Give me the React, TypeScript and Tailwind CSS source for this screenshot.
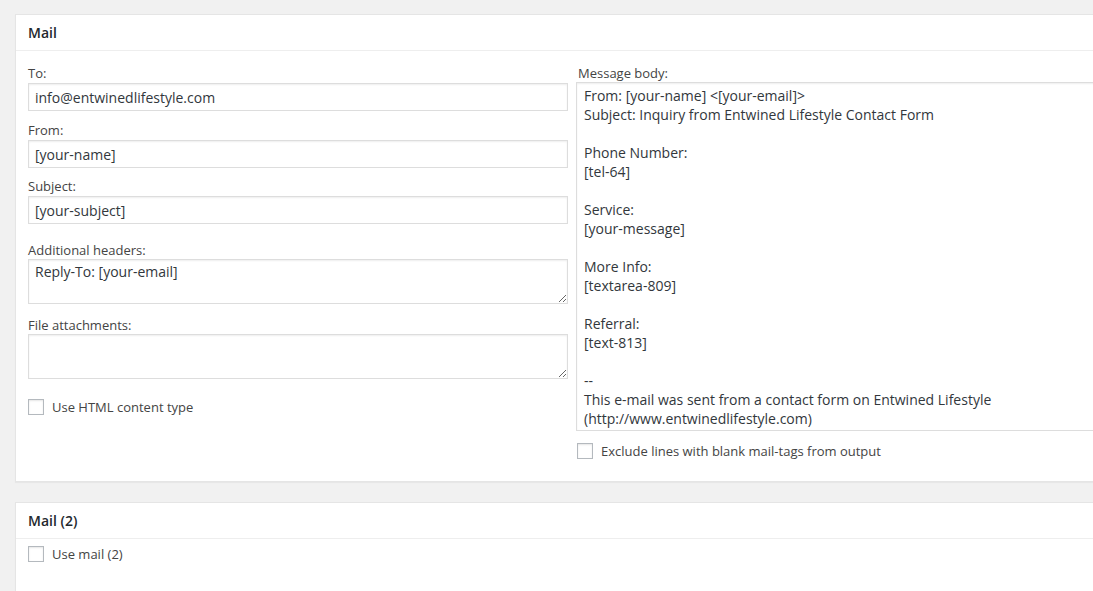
import React from "react";

const font = { fontFamily: '"Open Sans", "Liberation Sans", sans-serif' };

const body = `From: [your-name] <[your-email]>
Subject: Inquiry from Entwined Lifestyle Contact Form

Phone Number:
[tel-64]

Service:
[your-message]

More Info:
[textarea-809]

Referral:
[text-813]

--
This e-mail was sent from a contact form on Entwined Lifestyle
(http://www.entwinedlifestyle.com)`;

function Label({ children }: { children: React.ReactNode }) {
  return <div className="text-[13px] leading-[18px] text-[#444]">{children}</div>;
}

function TextInput({ value }: { value: string }) {
  return (
    <input
      readOnly
      value={value}
      className="mt-px block h-[28px] w-full border border-[#ddd] bg-white px-[6px] text-[14px] text-[#32373c] shadow-[inset_0_1px_2px_rgba(0,0,0,0.07)] outline-none"
      style={font}
    />
  );
}

function Checkbox({ label }: { label: string }) {
  return (
    <div className="flex items-center">
      <span className="block h-[16px] w-[16px] border border-[#b4b9be] bg-white shadow-[inset_0_1px_2px_rgba(0,0,0,0.1)]" />
      <span className="ml-[8px] text-[13px] leading-[18px] text-[#444]">{label}</span>
    </div>
  );
}

export default function App() {
  return (
    <div className="min-h-[591px] w-[1093px] overflow-hidden bg-[#f1f1f1]" style={font}>
      <div className="h-[14px]" />
      <div className="ml-[15px] w-[1110px] border border-[#e5e5e5] bg-white shadow-[0_1px_1px_rgba(0,0,0,0.04)]">
        <div className="border-b border-[#eee] px-[12px] py-[8px] text-[14px] font-semibold leading-[19px] text-[#23282d]">
          Mail
        </div>
        <div className="flex px-[12px] pb-[21px] pt-[13px]">
          <div className="w-[540px] shrink-0">
            <Label>To:</Label>
            <TextInput value="info@entwinedlifestyle.com" />
            <div className="h-[10px]" />
            <Label>From:</Label>
            <TextInput value="[your-name]" />
            <div className="h-[9px]" />
            <Label>Subject:</Label>
            <TextInput value="[your-subject]" />
            <div className="h-[17px]" />
            <Label>Additional headers:</Label>
            <textarea
              readOnly
              defaultValue="Reply-To: [your-email]"
              className="block h-[45px] w-full resize-y border border-[#ddd] bg-white px-[6px] py-[2px] text-[14px] leading-[19px] text-[#32373c] shadow-[inset_0_1px_2px_rgba(0,0,0,0.07)] outline-none"
              style={font}
            />
            <div className="h-[12px]" />
            <Label>File attachments:</Label>
            <textarea
              readOnly
              defaultValue=""
              className="block h-[45px] w-full resize-y border border-[#ddd] bg-white px-[6px] py-[2px] text-[14px] leading-[19px] text-[#32373c] shadow-[inset_0_1px_2px_rgba(0,0,0,0.07)] outline-none"
              style={font}
            />
            <div className="h-[19px]" />
            <Checkbox label="Use HTML content type" />
          </div>
          <div className="ml-[8px] flex-1">
            <div className="pl-[2px]">
              <Label>Message body:</Label>
            </div>
            <textarea
              readOnly
              defaultValue={body}
              className="block h-[349px] w-full resize-none overflow-hidden border border-[#ddd] bg-white px-[7px] py-[3px] text-[14px] leading-[19px] text-[#32373c] shadow-[inset_0_1px_2px_rgba(0,0,0,0.07)] outline-none"
              style={font}
            />
            <div className="mt-[11px] pl-px">
              <Checkbox label="Exclude lines with blank mail-tags from output" />
            </div>
          </div>
        </div>
      </div>
      <div className="h-[20px]" />
      <div className="ml-[15px] w-[1110px] border border-[#e5e5e5] bg-white pb-[40px] shadow-[0_1px_1px_rgba(0,0,0,0.04)]">
        <div className="border-b border-[#eee] px-[12px] py-[8px] text-[14px] font-semibold leading-[19px] text-[#23282d]">
          Mail (2)
        </div>
        <div className="px-[12px] pt-[6px]">
          <Checkbox label="Use mail (2)" />
        </div>
      </div>
    </div>
  );
}
